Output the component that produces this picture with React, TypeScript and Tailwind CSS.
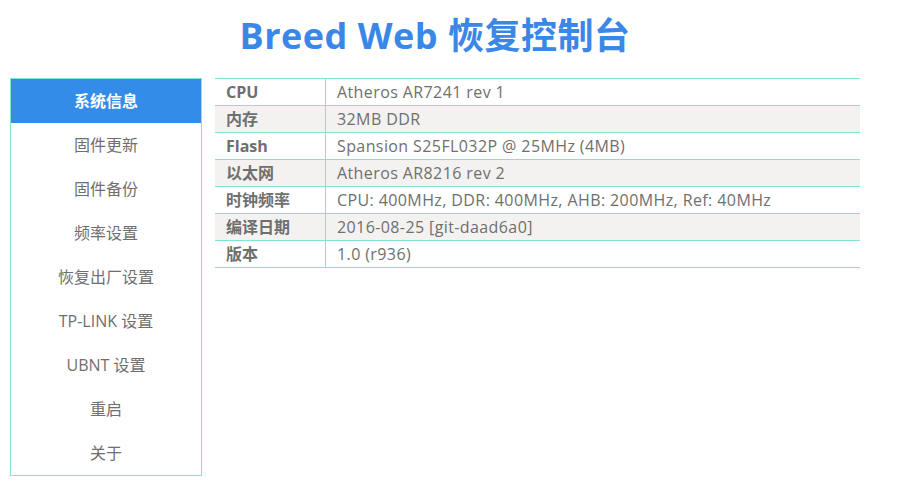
const menu = [
  '系统信息',
  '固件更新',
  '固件备份',
  '频率设置',
  '恢复出厂设置',
  'TP-LINK 设置',
  'UBNT 设置',
  '重启',
  '关于',
];

const info: [string, string][] = [
  ['CPU', 'Atheros AR7241 rev 1'],
  ['内存', '32MB DDR'],
  ['Flash', 'Spansion S25FL032P @ 25MHz (4MB)'],
  ['以太网', 'Atheros AR8216 rev 2'],
  ['时钟频率', 'CPU: 400MHz, DDR: 400MHz, AHB: 200MHz, Ref: 40MHz'],
  ['编译日期', '2016-08-25 [git-daad6a0]'],
  ['版本', '1.0 (r936)'],
];

export default function App() {
  return (
    <div
      className="w-[920px] h-[487px] bg-white text-[#6f6f6f]"
      style={{ fontFamily: '"Open Sans", "Noto Sans CJK SC", sans-serif' }}
    >
      <div className="w-[850px] ml-[10px]">
        {/* Header */}
        <h1 className="h-[78px] pb-[6px] flex items-center justify-center text-[36px] font-bold text-[#3a87e8] tracking-[0.5px]">
          Breed Web 恢复控制台
        </h1>

        <div className="flex items-start">
          {/* Side menu */}
          <ul className="w-[192px] border border-[#80e5d0]">
            {menu.map((item, i) => (
              <li
                key={item}
                className={`h-[44px] flex items-center justify-center text-[16px] ${
                  i === 0 ? 'bg-[#338ce8] text-white font-bold' : 'text-[#6f6f6f]'
                }`}
              >
                {item}
              </li>
            ))}
          </ul>

          {/* System info table */}
          <div className="ml-[13px] flex-1 border-t border-[#80e5d0]">
            {info.map(([label, value], i) => (
              <div
                key={label}
                className={`flex h-[27px] border-b border-[#80e5d0] text-[16px] ${
                  i % 2 === 1 ? 'bg-[#f3f2f0]' : 'bg-white'
                }`}
              >
                <div className="w-[111px] pl-[11px] border-r border-[#80e5d0] font-bold flex items-center">
                  {label}
                </div>
                <div className="flex-1 pl-[11px] flex items-center tracking-[0.4px]">{value}</div>
              </div>
            ))}
          </div>
        </div>
      </div>
    </div>
  );
}
